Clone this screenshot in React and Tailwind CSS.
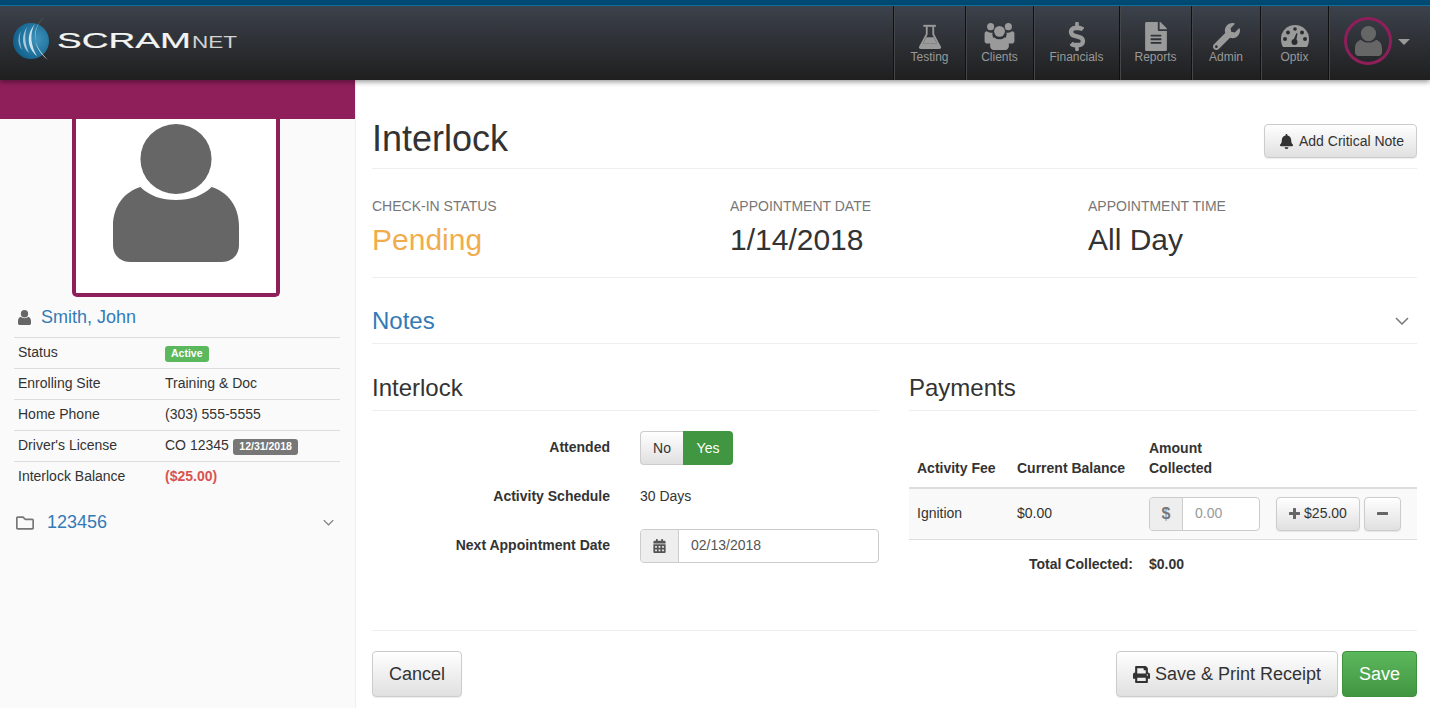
import React from "react";
import { FaBell, FaPrint, FaCalendarAlt, FaRegFolder, FaFileAlt, FaWrench, FaDollarSign } from "react-icons/fa";

const Chevron = ({ className }) => (
  <svg viewBox="0 0 14 8" className={className} fill="none" stroke="currentColor" strokeWidth="1.5"><path d="M1 1l6 6 6-6" /></svg>
);

const personPath = "M29 63c9 9 21 13 35 13s26-4 35-13c16 5 27 19 27 39v19c0 10-7 17-17 17H19c-10 0-17-7-17-17v-19c0-20 11-34 27-39z";

const Person = ({ className }) => (
  <svg viewBox="2 0 124 138" className={className} fill="currentColor" preserveAspectRatio="none">
    <circle cx="64" cy="35" r="35" />
    <path d={personPath} />
  </svg>
);

const Flask = ({ className }) => (
  <svg viewBox="0 0 28 30" className={className} fill="currentColor">
    <rect x="6" y="1" width="15" height="2.4" />
    <path d="M9 3h2.2v9.5L5.6 23h16.8L16.8 12.500V3H19v9l8 15c1 2-.2 3-2 3H3c-1.800 0-3-1-2-3l8-15z" />
    <path d="M5.600 23l4-7h8.800l4 7z" />
  </svg>
);

const Users = ({ className }) => (
  <svg viewBox="0 0 32 30" className={className} fill="currentColor">
    <circle cx="6.500" cy="5" r="3.800" /><circle cx="25.500" cy="5" r="3.800" /><circle cx="16" cy="10" r="5.800" />
    <path d="M0 13c0-2 1-3 2.500-3 1.500 1 2.500 1.500 4 1.500h2c-.5 3 .5 5 2 6.500-2 1-3.500 3-4 5H3c-2 0-3-1-3-3z" />
    <path d="M32 13c0-2-1-3-2.500-3-1.500 1-2.500 1.500-4 1.500h-2c.5 3-.5 5-2 6.500 2 1 3.500 3 4 5H29c2 0 3-1 3-3z" />
    <path d="M10.500 16.500c1.500 1.300 3.500 2 5.500 2s4-.7 5.500-2c3 .5 4.500 3 4.500 6.500v3c0 2-1.500 4-4 4H10c-2.500 0-4-2-4-4v-3c0-3.500 1.500-6 4.500-6.500z" />
  </svg>
);

const Gauge = ({ className }) => (
  <svg viewBox="0 0 28 22" className={className}>
    <path d="M0 14a14 14 0 0 1 28 0c0 3-.7 6-2 8H2c-1.300-2-2-5-2-8z" fill="currentColor" />
    <g fill="#2a2c31">
      <circle cx="4" cy="14" r="2" /><circle cx="7" cy="7.500" r="2" /><circle cx="14" cy="4" r="1.800" /><circle cx="21" cy="7.500" r="2" /><circle cx="24" cy="14" r="2" />
      <circle cx="13.500" cy="17" r="3" /><path d="M12 16L15.500 8l1 .4L15 17z" />
    </g>
  </svg>
);

const PlusIcon = () => (
  <svg viewBox="0 0 11 11" className="w-[11px] h-[11px] text-[#666666]" fill="currentColor"><rect x="4" y="0" width="3" height="11" rx="0.5" /><rect x="0" y="4" width="11" height="3" rx="0.5" /></svg>
);

const MinusIcon = () => (
  <svg viewBox="0 0 11 3" className="w-[11px] h-[3px] text-[#666666]" fill="currentColor"><rect x="0" y="0" width="11" height="3" rx="0.5" /></svg>
);

const NavItem = ({ icon, label, w }) => (
  <div className={`flex flex-col items-center h-full border-l border-l-[#101010] shadow-[inset_1px_0_0_#44464a] ${w}`}>
    <div className="h-[30px] mt-[15px] flex items-center justify-center text-[#9a9a9a]">{icon}</div>
    <div className="text-[12px] leading-[14px] mt-[-1px] text-[#999999]">{label}</div>
  </div>
);

const Logo = () => (
  <svg viewBox="0 0 240 60" className="w-[240px] h-[60px] ml-[12px] mt-[4px]">
    <defs>
      <radialGradient id="globe" cx="0.65" cy="0.45" r="0.7">
        <stop offset="0" stopColor="#3f94bb" />
        <stop offset="1" stopColor="#0d5c88" />
      </radialGradient>
    </defs>
    <circle cx="19" cy="31" r="18" fill="url(#globe)" />
    <path d="M33 6C22 16 17 35 36 50 26 40 14 24 33 6z" fill="#f2f6f8" />
    <path d="M23 14C14 24 15 38 25 46 19 36 17 24 23 14z" fill="#cfe2ec" />
    <path d="M15 17C9 26 10 37 17 43 13 34 12 25 15 17z" fill="#a9cbdc" />
    <path d="M9 21C5 28 6 35 10 40 8 33 7 27 9 21z" fill="#8ab8cf" />
    <text x="45" y="38" fontFamily="'Liberation Sans', sans-serif" fontSize="22" fill="#f4f4f4" stroke="#f4f4f4" strokeWidth="0.2" textLength="134" lengthAdjust="spacingAndGlyphs">SCRAM</text>
    <text x="180" y="38" fontFamily="'Liberation Sans', sans-serif" fontSize="16" fill="#d0d2d4" textLength="45" lengthAdjust="spacingAndGlyphs">NET</text>
  </svg>
);

const Row = ({ label, children }) => (
  <div className="flex h-[31px] border-t border-[#dddddd] items-center text-[14px] pb-[1px]">
    <div className="w-[151px] pl-[4px] shrink-0">{label}</div>
    <div className="flex items-center">{children}</div>
  </div>
);

const btn = "border border-[#cccccc] rounded-[4px] bg-gradient-to-b from-[#ffffff] to-[#e0e0e0] shadow-[0_1px_1px_rgba(0,0,0,0.08)] text-[#333333] flex items-center justify-center";

export default function App() {
  return (
    <div className="w-[1430px] h-[708px] overflow-hidden bg-white text-[#333333] font-['Liberation_Sans',Arial,sans-serif] flex flex-col relative">
      <div className="h-[6px] bg-[#004a73] border-b border-b-[#1278a8] shrink-0" />
      <header className="h-[74px] shrink-0 bg-gradient-to-b from-[#3c424c] to-[#1f1f1f] flex justify-between shadow-[0_2px_5px_rgba(0,0,0,0.4)] relative z-10">
        <Logo />
        <nav className="flex h-full">
          <NavItem w="w-[72px]" label="Testing" icon={<Flask className="w-[24px] h-[25px]" />} />
          <NavItem w="w-[68px]" label="Clients" icon={<Users className="w-[31px] h-[28px]" />} />
          <NavItem w="w-[86px]" label="Financials" icon={<FaDollarSign className="w-[28px] h-[29px]" />} />
          <NavItem w="w-[72px]" label="Reports" icon={<FaFileAlt className="w-[26px] h-[29px]" />} />
          <NavItem w="w-[69px]" label="Admin" icon={<FaWrench className="w-[27px] h-[27px]" />} />
          <NavItem w="w-[68px]" label="Optix" icon={<Gauge className="w-[28px] h-[22px]" />} />
          <div className="w-[102px] h-full border-l border-l-[#101010] shadow-[inset_1px_0_0_#44464a] flex items-center pl-[15px]">
            <div className="w-[48px] h-[48px] rounded-full border-[3px] border-[#8f1f5a] flex items-center justify-center mb-[4px] text-[#666666]">
              <Person className="w-[27px] h-[30px]" />
            </div>
            <div className="ml-[6px] mt-[-3px] w-0 h-0 border-l-[6px] border-r-[6px] border-t-[6px] border-l-transparent border-r-transparent border-t-[#9a9a9a]" />
          </div>
        </nav>
      </header>

      <div className="flex flex-1 min-h-0">
        <aside className="w-[356px] shrink-0 bg-[#fafafa] border-r border-[#eeeeee] flex flex-col">
          <div className="h-[39px] bg-[#8f1f5a] shrink-0" />
          <div className="w-[208px] h-[178px] ml-[72px] bg-white border-[4px] border-t-0 border-[#8f1f5a] rounded-b-[5px] flex justify-center text-[#666666] pt-[5px] shrink-0">
            <Person className="w-[126px] h-[138px]" />
          </div>
          <div className="flex items-center h-[40px] pl-[18px] shrink-0">
            <Person className="w-[13px] h-[15px] text-[#666666] mr-[10px]" />
            <span className="text-[#337ab7] text-[18px] pt-[1px]">Smith, John</span>
          </div>
          <div className="ml-[14px] w-[326px] shrink-0">
            <Row label="Status"><span className="bg-[#5cb85c] text-white text-[10.500px] font-bold leading-[15px] h-[16px] px-[6px] rounded-[3px] mt-[2px]">Active</span></Row>
            <Row label="Enrolling Site">Training &amp; Doc</Row>
            <Row label="Home Phone">(303) 555-5555</Row>
            <Row label="Driver's License">CO 12345<span className="ml-[4px] bg-[#777777] text-white text-[10.500px] font-bold leading-[15px] h-[16px] px-[6.500px] rounded-[3px] mt-[2px]">12/31/2018</span></Row>
            <Row label="Interlock Balance"><span className="text-[#d9534f] font-bold">($25.00)</span></Row>
          </div>
          <div className="flex items-center pl-[16px] pr-[21px] mt-[17px] text-[#666666] shrink-0">
            <FaRegFolder className="w-[18px] h-[18px] text-[#777777]" />
            <span className="text-[#337ab7] text-[18px] ml-[13px] flex-1">123456</span>
            <Chevron className="w-[11px] h-[7px] text-[#777777]" />
          </div>
        </aside>

        <main className="flex-1 pl-[16px] pr-[13px] min-w-0">
          <div className="flex justify-between items-start h-[89px] border-b border-[#eeeeee]">
            <h1 className="text-[36px] leading-[40px] text-[#333333] mt-[39px]">Interlock</h1>
            <button className={`${btn} mt-[44px] h-[34px] w-[153px] text-[14px] gap-[5px] pl-[2px]`}><FaBell className="w-[15px] h-[15px]" />Add Critical Note</button>
          </div>

          <div className="grid grid-cols-[358px_358px_1fr] h-[109px] border-b border-[#eeeeee] pt-[29px]">
            <div><div className="text-[14px] leading-[17px] text-[#777777]">CHECK-IN STATUS</div><div className="text-[30px] leading-[34px] mt-[8px] text-[#f0ad4e]">Pending</div></div>
            <div><div className="text-[14px] leading-[17px] text-[#777777]">APPOINTMENT DATE</div><div className="text-[30px] leading-[34px] mt-[8px]">1/14/2018</div></div>
            <div><div className="text-[14px] leading-[17px] text-[#777777]">APPOINTMENT TIME</div><div className="text-[30px] leading-[34px] mt-[8px]">All Day</div></div>
          </div>

          <div className="flex items-center justify-between h-[66px] pt-[21px] border-b border-[#eeeeee]">
            <h2 className="text-[24px] text-[#337ab7] leading-[26px]">Notes</h2>
            <Chevron className="w-[14px] h-[8px] mr-[8px] text-[#777777]" />
          </div>

          <div className="grid grid-cols-[507px_508px] gap-x-[30px] pt-[30px] h-[287px] border-b border-[#eeeeee]">
            <section>
              <h3 className="text-[24px] leading-[28px] h-[37px] border-b border-[#eeeeee]">Interlock</h3>
              <div className="flex items-center mt-[20px] text-[14px]">
                <div className="w-[238px] text-right font-bold pb-[2px]">Attended</div>
                <div className="ml-[30px] flex h-[34px]">
                  <button className="w-[43px] border border-[#cccccc] border-r-0 rounded-l-[4px] bg-gradient-to-b from-[#ffffff] to-[#e0e0e0]">No</button>
                  <button className="w-[50px] bg-[#419641] rounded-r-[4px] text-white">Yes</button>
                </div>
              </div>
              <div className="flex items-center mt-[23px] text-[14px] h-[17px]">
                <div className="w-[238px] text-right font-bold">Activity Schedule</div>
                <div className="ml-[30px]">30 Days</div>
              </div>
              <div className="flex items-center mt-[24px] text-[14px]">
                <div className="w-[238px] text-right font-bold pb-[2px]">Next Appointment Date</div>
                <div className="ml-[30px] w-[239px] h-[34px] flex border border-[#cccccc] rounded-[4px]">
                  <div className="w-[38px] bg-[#eeeeee] border-r border-[#cccccc] rounded-l-[4px] flex items-center justify-center"><FaCalendarAlt className="w-[13px] h-[14px] text-[#555555]" /></div>
                  <div className="flex-1 pl-[12px] pb-[2px] flex items-center text-[#555555]">02/13/2018</div>
                </div>
              </div>
            </section>

            <section>
              <h3 className="text-[24px] leading-[28px] h-[37px] border-b border-[#eeeeee]">Payments</h3>
              <table className="w-full text-[14px] mt-[27px] border-collapse">
                <thead>
                  <tr className="border-b-2 border-[#dddddd]">
                    <th className="w-[100px] text-left align-bottom font-bold pl-[8px] pb-[9px] leading-[20px]">Activity Fee</th>
                    <th className="w-[132px] text-left align-bottom font-bold pl-[8px] pb-[9px] leading-[20px] whitespace-nowrap">Current Balance</th>
                    <th className="text-left align-bottom font-bold pl-[8px] pb-[9px] leading-[20px]">Amount<br />Collected</th>
                  </tr>
                </thead>
                <tbody>
                  <tr className="bg-[#f9f9f9] border-b border-[#dddddd] h-[51px]">
                    <td className="pl-[8px]">Ignition</td>
                    <td className="pl-[8px]">$0.00</td>
                    <td className="pl-[8px]">
                      <div className="flex">
                        <div className="w-[111px] h-[34px] flex border border-[#cccccc] rounded-[4px] bg-white">
                          <div className="w-[33px] bg-[#eeeeee] border-r border-[#cccccc] rounded-l-[4px] flex items-center justify-center text-[#777777] font-bold text-[16px]">$</div>
                          <div className="flex-1 pl-[12px] flex items-center text-[#999999]">0.00</div>
                        </div>
                        <button className={`${btn} ml-[16px] w-[84px] h-[34px] gap-[4px]`}><PlusIcon />$25.00</button>
                        <button className={`${btn} ml-[4px] w-[37px] h-[34px]`}><MinusIcon /></button>
                      </div>
                    </td>
                  </tr>
                  <tr className="h-[51px] font-bold">
                    <td colSpan={2} className="text-right pr-[8px]">Total Collected:</td>
                    <td className="pl-[8px]">$0.00</td>
                  </tr>
                </tbody>
              </table>
            </section>
          </div>

          <div className="flex justify-between mt-[20px]">
            <button className={`${btn} w-[90px] h-[46px] text-[18px]`}>Cancel</button>
            <div className="flex gap-[4px]">
              <button className={`${btn} w-[222px] h-[46px] text-[18px] gap-[5px]`}><FaPrint className="w-[17px] h-[17px]" />Save &amp; Print Receipt</button>
              <button className="w-[75px] h-[46px] text-[18px] text-white rounded-[4px] border border-[#3e8f3e] bg-gradient-to-b from-[#5cb85c] to-[#419641]">Save</button>
            </div>
          </div>
        </main>
      </div>
    </div>
  );
}
